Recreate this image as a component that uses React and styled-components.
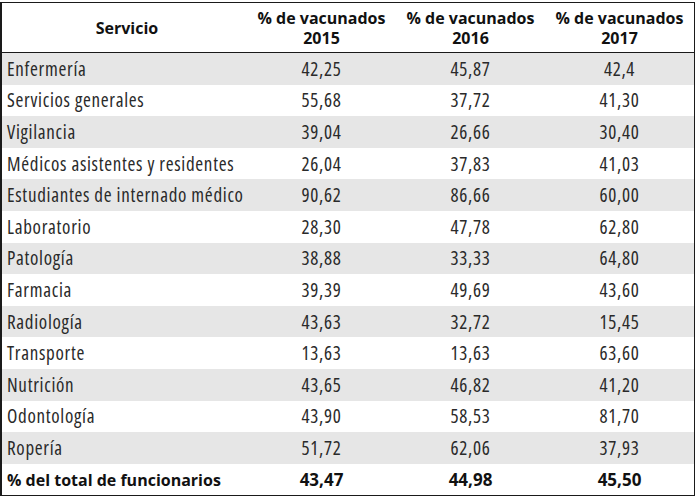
import React from 'react'
import styled, { createGlobalStyle } from 'styled-components'

const GlobalStyle = createGlobalStyle`
  html, body {
    margin: 0;
    padding: 0;
    background: #ffffff;
  }
`

const rows = [
  ['Enfermería', '42,25', '45,87', '42,4'],
  ['Servicios generales', '55,68', '37,72', '41,30'],
  ['Vigilancia', '39,04', '26,66', '30,40'],
  ['Médicos asistentes y residentes', '26,04', '37,83', '41,03'],
  ['Estudiantes de internado médico', '90,62', '86,66', '60,00'],
  ['Laboratorio', '28,30', '47,78', '62,80'],
  ['Patología', '38,88', '33,33', '64,80'],
  ['Farmacia', '39,39', '49,69', '43,60'],
  ['Radiología', '43,63', '32,72', '15,45'],
  ['Transporte', '13,63', '13,63', '63,60'],
  ['Nutrición', '43,65', '46,82', '41,20'],
  ['Odontología', '43,90', '58,53', '81,70'],
  ['Ropería', '51,72', '62,06', '37,93'],
]

const Page = styled.div`
  width: 698px;
  height: 498px;
  padding: 2px 0 0 0;
  box-sizing: border-box;
  font-family: "Open Sans", "Noto Sans", sans-serif;
`

const Table = styled.div`
  width: 695px;
  border: 1px solid #1a1a1a;
  border-left-width: 2px;
  box-sizing: border-box;
  color: #2a2a2a;
`

const Row = styled.div`
  display: grid;
  grid-template-columns: 245px 149px 149px 1fr;
  height: ${p => p.$h || 31.6}px;
  align-items: center;
  background: ${p => (p.$shade ? '#e6e6e6' : '#ffffff')};
  border-bottom: ${p => (p.$line ? '1px solid #1a1a1a' : 'none')};
  font-weight: ${p => (p.$bold ? 700 : 400)};
  color: ${p => (p.$bold ? '#111' : '#2a2a2a')};
  font-size: ${p => (p.$bold ? 16 : 19)}px;
  font-stretch: ${p => (p.$bold ? '100%' : '87.5%')};
  letter-spacing: ${p => (p.$bold ? 0 : 0.7)}px;
`

const Label = styled.div`
  padding-left: 5px;
  white-space: nowrap;
  text-align: ${p => (p.$center ? 'center' : 'left')};
`

const Cell = styled.div`
  text-align: center;
  line-height: 20px;
  white-space: nowrap;
  font-size: ${p => (p.$big ? 17 : 'inherit')}px;
`

export default function App() {
  return (
    <>
      <GlobalStyle />
      <Page>
        <Table>
          <Row $h={49} $line $bold>
            <Label $center>Servicio</Label>
            <Cell>% de vacunados<br />2015</Cell>
            <Cell>% de vacunados<br />2016</Cell>
            <Cell>% de vacunados<br />2017</Cell>
          </Row>
          {rows.map((r, i) => (
            <Row key={r[0]} $shade={i % 2 === 0}>
              <Label>{r[0]}</Label>
              <Cell>{r[1]}</Cell>
              <Cell>{r[2]}</Cell>
              <Cell>{r[3]}</Cell>
            </Row>
          ))}
          <Row $bold>
            <Label>% del total de funcionarios</Label>
            <Cell $big>43,47</Cell>
            <Cell $big>44,98</Cell>
            <Cell $big>45,50</Cell>
          </Row>
        </Table>
      </Page>
    </>
  )
}
